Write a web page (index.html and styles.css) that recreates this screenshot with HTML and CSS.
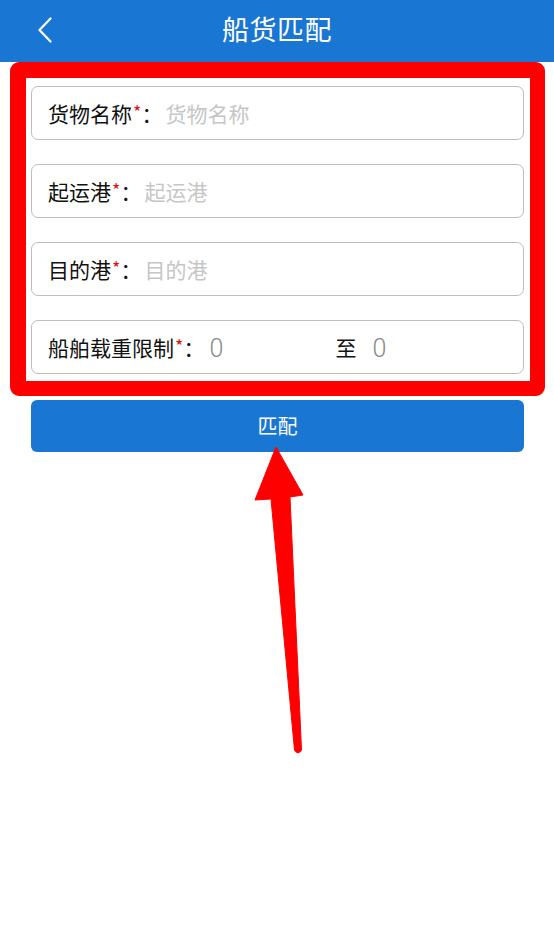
FILE: index.html
```html
<!DOCTYPE html>
<html lang="zh-CN">
<head>
<meta charset="utf-8">
<title>船货匹配</title>
<link rel="stylesheet" href="styles.css">
</head>
<body>
<header class="topbar">
  <div class="back">
    <svg width="16" height="26" viewBox="0 0 16 26"><path d="M13.5 1.5 L2.5 13 L13.5 24.5" fill="none" stroke="#fff" stroke-width="2.2" stroke-linecap="round" stroke-linejoin="round"/></svg>
  </div>
  <h1 class="title">船货匹配</h1>
  <div class="spacer"></div>
</header>

<main class="content">
  <div class="highlight">
    <div class="field"><span class="label">货物名称<i class="req">*</i>：</span><span class="ph">货物名称</span></div>
    <div class="field"><span class="label">起运港<i class="req">*</i>：</span><span class="ph">起运港</span></div>
    <div class="field"><span class="label">目的港<i class="req">*</i>：</span><span class="ph">目的港</span></div>
    <div class="field"><span class="label">船舶载重限制<i class="req">*</i>：</span><span class="num num-first">0</span><span class="to">至</span><span class="num">0</span></div>
  </div>
  <button class="match-btn">匹配</button>
</main>

<svg class="arrow" width="554" height="935" viewBox="0 0 554 935">
  <path d="M276 447 L303 495 L290 497 L301.5 750 Q298 756 294.5 750 L271 499 L255 500 Z" fill="#ff0000" stroke="#ff0000" stroke-width="1" stroke-linejoin="round"/>
</svg>
</body>
</html>
```

FILE: styles.css
```css
* { box-sizing: border-box; }
html, body { margin: 0; padding: 0; background: #fff; }
body {
  width: 554px;
  height: 935px;
  position: relative;
  font-family: "Noto Sans CJK SC", "Noto Sans", sans-serif;
  overflow: hidden;
}
.topbar {
  height: 62px;
  background: #1976d2;
  display: grid;
  grid-template-columns: 1fr auto 1fr;
  align-items: center;
  padding-bottom: 5px;
}
.back {
  padding-left: 37px;
  display: flex;
  align-items: center;
  padding-top: 2px;
}
.title {
  margin: 0;
  color: #fff;
  font-size: 27px;
  font-weight: 400;
  line-height: 1;
  letter-spacing: 0.5px;
}
.content {
  display: flex;
  flex-direction: column;
}
.highlight {
  margin: 0 9px 0 10px;
  border: solid #ff0000;
  border-width: 16px 15px 15px 16px;
  border-radius: 9px;
  padding: 8px 6px 7px 5px;
  display: flex;
  flex-direction: column;
  gap: 24px;
  background: #fff;
}
.field {
  height: 54px;
  border: 1px solid #bdbdbd;
  border-radius: 7px;
  display: flex;
  align-items: center;
  padding-left: 16px;
  font-size: 21px;
  color: #111;
}
.label { white-space: nowrap; margin-right: 3px; }
.req {
  font-style: normal;
  color: #e01010;
  font-size: 18px;
  vertical-align: 3px;
  margin-left: 1px;
}
.ph { color: #c6c6c6; }
.num {
  font-family: Roboto, "Noto Sans", sans-serif;
  font-weight: 300;
  font-size: 25px;
  color: #8a8a8a;
  margin-top: 2px;
}
.num-first { width: 126px; margin-left: 2px; }
.to { margin-right: 16px; }
.match-btn {
  margin: 4px 30px 0 31px;
  height: 52px;
  border: none;
  border-radius: 6px;
  background: #1976d2;
  color: #fff;
  font-family: "Noto Sans CJK SC", sans-serif;
  font-size: 20px;
  padding: 0 0 2px;
}
.arrow {
  position: absolute;
  left: 0;
  top: 0;
  pointer-events: none;
}
```
